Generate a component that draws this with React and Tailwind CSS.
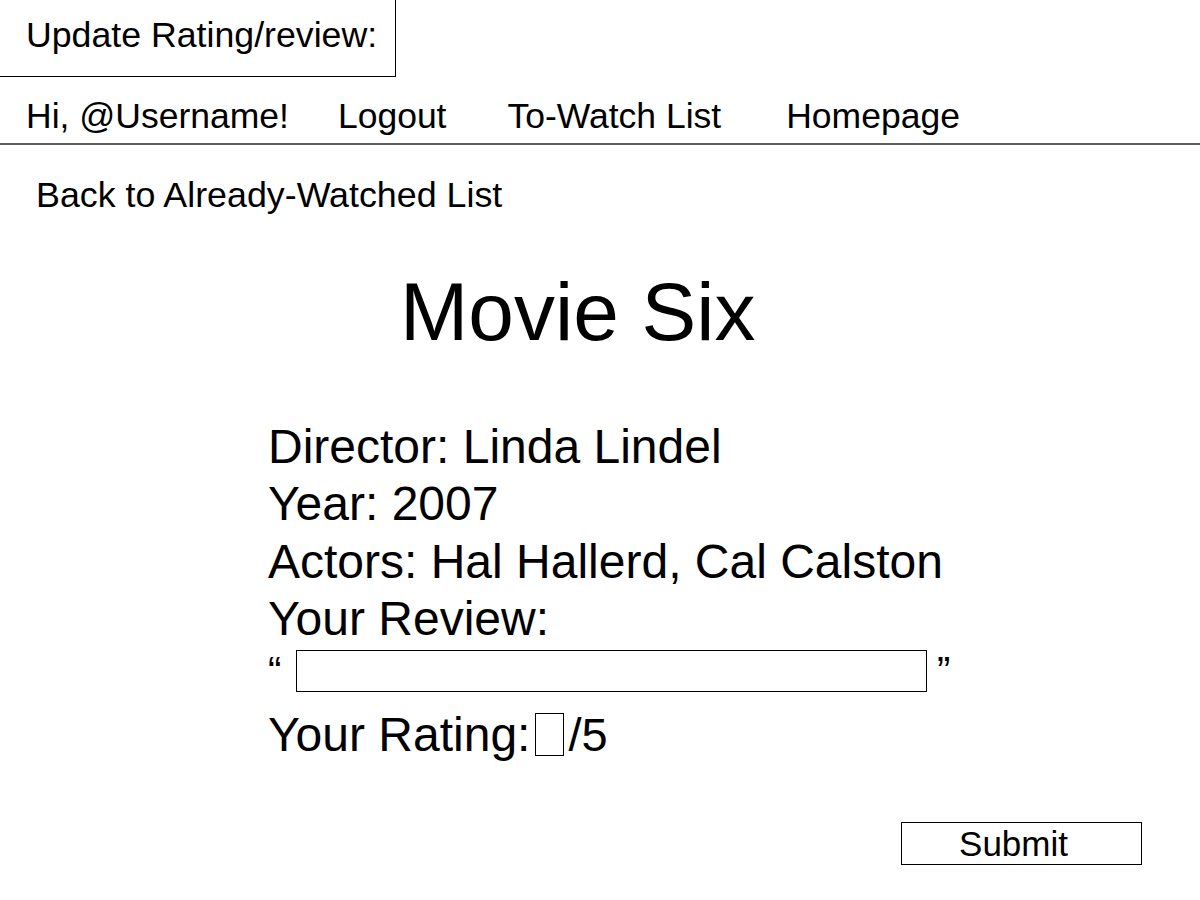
import React from 'react';

const navItems = [
  { label: 'Hi, @Username!', cls: '' },
  { label: 'Logout', cls: 'ml-[49px]' },
  { label: 'To-Watch List', cls: 'ml-[61px]' },
  { label: 'Homepage', cls: 'ml-[65px]' },
];

const details = [
  'Director: Linda Lindel',
  'Year: 2007',
  'Actors: Hal Hallerd, Cal Calston',
  'Your Review:',
];

export default function App() {
  return (
    <div className="w-[1200px] h-[900px] bg-white text-black font-['Liberation_Sans',Arial,sans-serif] overflow-hidden">
      <div className="w-[396px] h-[77px] border-r border-b border-black flex items-center pl-[26px] pb-[5px]">
        <span className="text-[35.7px] leading-none">Update Rating/review:</span>
      </div>

      <nav className="h-[68px] flex items-center pt-[13px] pl-[26px] border-b-2 border-[#5f5f5f]">
        {navItems.map((item) => (
          <span key={item.label} className={`text-[35.5px] leading-none ${item.cls}`}>
            {item.label}
          </span>
        ))}
      </nav>

      <div className="mt-[33px] pl-[36px] text-[35.8px] leading-none">Back to Already-Watched List</div>

      <h1 className="mt-[57px] pl-[400px] text-[82px] leading-none font-normal">Movie Six</h1>

      <div className="mt-[65px] pl-[268px]">
        {details.map((line) => (
          <div key={line} className="text-[48px] leading-[57.5px]">
            {line}
          </div>
        ))}

        <div className="flex items-start mt-[2px]">
          <span className="w-[28px] mt-[1px] text-[40px] leading-none">“</span>
          <div className="w-[631px] h-[42px] border border-black" />
          <span className="ml-[10px] mt-[1px] text-[40px] leading-none">”</span>
        </div>

        <div className="flex items-center mt-[19px] h-[48px]">
          <span className="text-[48px] leading-none">Your Rating:</span>
          <div className="ml-[5px] w-[29px] h-[43px] border border-black" />
          <span className="ml-[4px] text-[47px] leading-none">/5</span>
        </div>
      </div>

      <div className="flex justify-end pr-[58px] mt-[63px]">
        <button className="w-[241px] h-[43px] border border-black flex items-center justify-center pr-[16px] bg-white">
          <span className="text-[35px] leading-none">Submit</span>
        </button>
      </div>
    </div>
  );
}
